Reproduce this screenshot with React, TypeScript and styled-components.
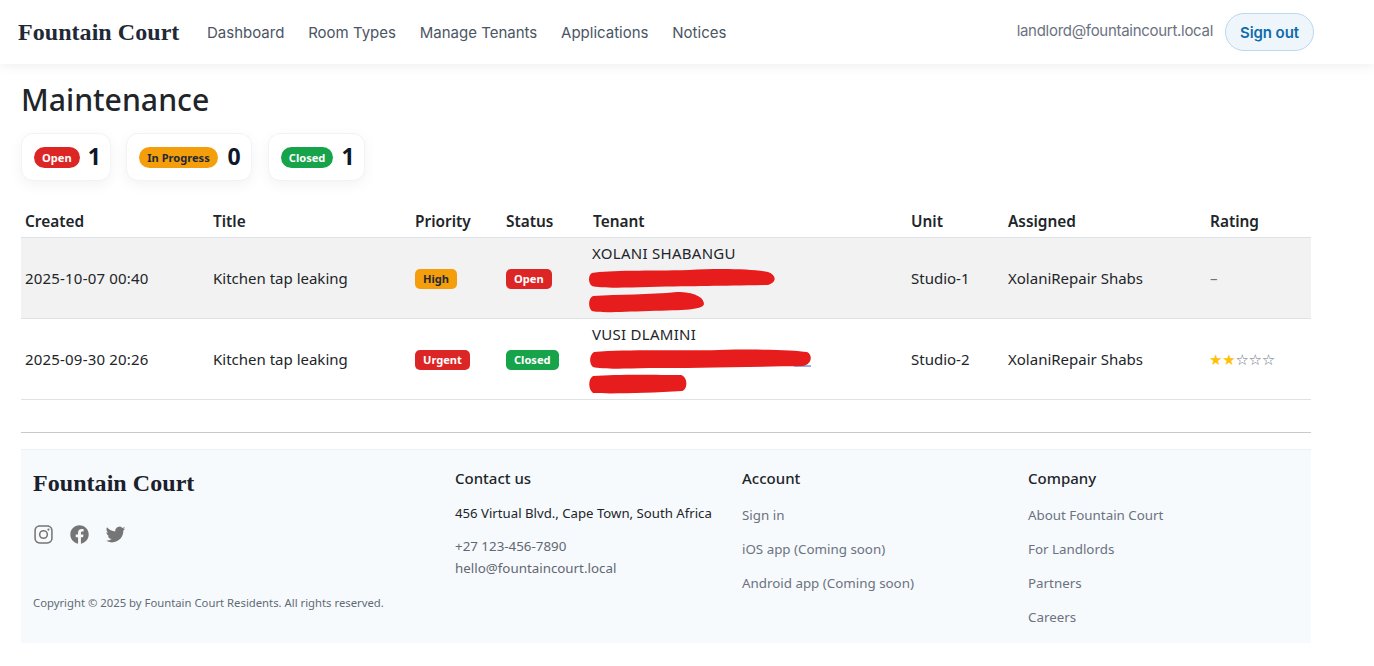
import React from "react";
import styled, { createGlobalStyle } from "styled-components";
import { IoLogoInstagram, IoLogoFacebook, IoLogoTwitter } from "react-icons/io5";

const Global = createGlobalStyle`
  html, body { margin: 0; padding: 0; background: #fff; overflow: hidden; }
  body { font-family: "Noto Sans", "Open Sans", sans-serif; color: #212529; }
`;

const Header = styled.header`
  height: 64px; display: flex; align-items: center; padding: 0 60px 0 18px;
  background: #fff; box-shadow: 0 1px 12px rgba(0,0,0,.08); position: relative;
`;
const Logo = styled.div<{ $size: number }>`
  font-family: "Liberation Serif", serif; font-weight: 700; font-size: ${p => p.$size}px;
  letter-spacing: .05px; color: #1f2937; white-space: nowrap;
`;
const Nav = styled.nav`
  display: flex; gap: 23.8px; margin-left: 27.6px; flex: 1;
  font-family: Inter, sans-serif; font-size: 15px; color: #4b5563;
`;
const Email = styled.span`
  font-family: Inter, sans-serif; font-size: 15px; letter-spacing: -.29px; color: #6b7280; margin-right: 12px; position: relative; top: -2px;
`;
const SignOut = styled.button`
  width: 89px; height: 38px; border-radius: 19px; border: 1px solid #b9d9f0; background: #eff6fb;
  font-family: Inter, sans-serif; font-size: 15px; font-weight: 600; letter-spacing: -.1px; color: #0f6cab; padding: 0;
`;
const Main = styled.main`
  padding: 0 63px 0 21px;
`;
const Title = styled.h1`
  margin: 0; padding-top: 15px; height: 54px; font-size: 30.2px; line-height: 42px; font-weight: 500; color: #212529;
`;
const Stats = styled.div`
  display: flex; gap: 15.5px; height: 73px;
`;
const StatCard = styled.div`
  height: 46px; display: flex; align-items: center; gap: 8px; padding: 0 9px 0 12px; background: #fff;
  border: 1px solid #f1f3f7; border-radius: 12px; box-shadow: 0 4px 14px rgba(15,23,42,.05);
`;
const Count = styled.span<{ $wide?: boolean }>`
  font-size: 23px; font-weight: 700; line-height: 30px; color: #0f172a; position: relative; top: -1px;
  margin: 0 ${p => (p.$wide ? "1.7px" : "0")};
`;
const tones = {
  red: "background:#dc2626;color:#fff;",
  amber: "background:#f59e0b;color:#1f2937;",
  green: "background:#16a34a;color:#fff;",
};
const Pill = styled.span<{ $tone: keyof typeof tones; $round?: boolean }>`
  ${p => tones[p.$tone]}
  display: inline-block; height: ${p => (p.$round ? 21 : 20)}px; line-height: ${p => (p.$round ? 21 : 20)}px;
  padding: 0 8px; font-size: 11.1px; font-weight: 700;
  border-radius: ${p => (p.$round ? "11px" : "5px")}; white-space: nowrap;
`;
const Table = styled.table`
  width: 1290px; border-collapse: collapse; table-layout: fixed; font-size: 15px;
`;
const Th = styled.th`
  text-align: left; font-weight: 600; font-size: 15.4px; height: 26px; padding: 0 4px 5px; vertical-align: bottom; line-height: 20px;
  border-bottom: 1px solid #dee2e6;
`;
const Row = styled.tr<{ $shade?: boolean }>`
  background: ${p => (p.$shade ? "#f2f2f2" : "#fff")};
`;
const Td = styled.td`
  height: 80px; padding: 0 4px; border-bottom: 1px solid #dee2e6; vertical-align: middle; line-height: 20px; color: #212529;
`;
const DateText = styled.span`
  letter-spacing: .19px;
`;
const TenantName = styled.div`
  height: 24px; line-height: 24px; margin-top: -2px; margin-left: -1px; letter-spacing: .28px;
`;
const Scribble = styled.svg`
  display: block; margin-left: -4px; height: 24px; width: 240px;
`;
const Dash = styled.span`color: #6b7280;`;
const Stars = styled.span`
  display: inline-flex; font-size: 15px; font-family: "DejaVu Sans", sans-serif; line-height: 20px; margin-left: -1px;
`;
const Star = styled.span<{ $on?: boolean }>`
  color: ${p => (p.$on ? "#ffc107" : "#6b7280")}; width: 13.2px; text-align: center;
`;
const Rule = styled.hr`
  margin: 32px 0 16px; border: 0; border-top: 1px solid #c9c9c9;
`;
const Footer = styled.footer`
  height: 194px; background: #f7fafd; border-top: 1px solid #eef0f2; box-sizing: border-box; padding: 0 12px;
  display: grid; grid-template-columns: 422px 287px 286px 1fr;
`;
const Column = styled.div`
  display: flex; flex-direction: column; padding-top: 17px;
`;
const BrandLogo = styled(Logo)`
  color: #1a202c; line-height: 30px; margin-top: 1px;
`;
const Icons = styled.div`
  display: flex; gap: 15px; margin-top: 26px; color: #757575; font-size: 21px; height: 24px;
`;
const Copy = styled.div`
  font-size: 11.3px; color: #616b75; margin-top: 47px; line-height: 16px;
`;
const ColTitle = styled.div`
  font-size: 15px; font-weight: 500; color: #212529; line-height: 22px; margin-bottom: 15px;
`;
const LinkList = styled.div`
  display: flex; flex-direction: column; gap: 16px; margin-top: 2px;
`;
const FLink = styled.div`
  font-size: 13.35px; color: #6b7280; line-height: 18px;
`;
const Address = styled.div`
  font-size: 13.2px; color: #212529; line-height: 18px; margin-bottom: 13px;
`;
const ContactLine = styled.div`
  font-size: 13.35px; color: #5f6872; line-height: 22px;
`;

const rows = [
  {
    created: "2025-10-07 00:40", priority: ["High", "amber"], status: ["Open", "red"], name: "XOLANI SHABANGU", unit: "Studio-1",
    a: "M3 8 C20 5 60 6 100 5 C130 3 165 4 179 7 C188 10 188 18 178 20 C130 21 110 21 60 22 C30 23 10 23 3 21 C-1 18 -1 10 3 8Z",
    b: "M4 7 C30 5 60 6 88 3 C105 3 115 8 115 15 C114 21 95 21 60 22 C30 23 10 24 3 22 C-1 19 -1 9 4 7Z",
    rating: 0,
  },
  {
    created: "2025-09-30 20:26", priority: ["Urgent", "red"], status: ["Closed", "green"], name: "VUSI DLAMINI", unit: "Studio-2",
    a: "M5 6 C40 3 90 5 130 4 C170 3 205 4 218 6 C224 9 223 18 214 20 C150 21 100 22 60 22 C30 23 12 23 4 21 C0 18 0 9 5 6Z",
    b: "M4 6 C30 4 70 5 92 5 C99 7 99 19 93 21 C60 23 20 24 4 23 C-1 19 -1 9 4 6Z",
    rating: 2,
  },
] as const;

const Redact = ({ d, ink }: { d: string; ink?: boolean }) => (
  <Scribble viewBox="0 0 240 24">
    {ink && <path d="M205 20 H222" stroke="#2f5fd0" strokeWidth="1" fill="none" />}
    <path d={d} fill="#e71d1d" />
  </Scribble>
);

export default function App() {
  return (
    <>
      <Global />
      <Header>
        <Logo $size={24}>Fountain Court</Logo>
        <Nav>
          <span>Dashboard</span><span>Room Types</span><span>Manage Tenants</span><span>Applications</span><span>Notices</span>
        </Nav>
        <Email>landlord@fountaincourt.local</Email>
        <SignOut>Sign out</SignOut>
      </Header>
      <Main>
        <Title>Maintenance</Title>
        <Stats>
          <StatCard><Pill $tone="red" $round>Open</Pill><Count>1</Count></StatCard>
          <StatCard><Pill $tone="amber" $round>In Progress</Pill><Count $wide>0</Count></StatCard>
          <StatCard><Pill $tone="green" $round>Closed</Pill><Count>1</Count></StatCard>
        </Stats>
        <Table>
          <colgroup>
            <col width={188} /><col width={202} /><col width={91} /><col width={87} /><col width={318} /><col width={97} /><col width={202} /><col width={105} />
          </colgroup>
          <thead>
            <tr>{["Created", "Title", "Priority", "Status", "Tenant", "Unit", "Assigned", "Rating"].map(h => <Th key={h}>{h}</Th>)}</tr>
          </thead>
          <tbody>
            {rows.map((r, i) => (
              <Row key={r.name} $shade={i === 0}>
                <Td><DateText>{r.created}</DateText></Td>
                <Td>Kitchen tap leaking</Td>
                <Td><Pill $tone={r.priority[1]}>{r.priority[0]}</Pill></Td>
                <Td><Pill $tone={r.status[1]}>{r.status[0]}</Pill></Td>
                <Td>
                  <TenantName>{r.name}</TenantName>
                  <Redact d={r.a} ink={i === 1} />
                  <Redact d={r.b} />
                </Td>
                <Td>{r.unit}</Td>
                <Td>XolaniRepair Shabs</Td>
                <Td>
                  {r.rating === 0 ? <Dash>–</Dash> : (
                    <Stars>{[0, 1, 2, 3, 4].map(s => <Star key={s} $on={s < r.rating}>{s < r.rating ? "★" : "☆"}</Star>)}</Stars>
                  )}
                </Td>
              </Row>
            ))}
          </tbody>
        </Table>
        <Rule />
        <Footer>
          <Column>
            <BrandLogo $size={24}>Fountain Court</BrandLogo>
            <Icons><IoLogoInstagram /><IoLogoFacebook /><IoLogoTwitter /></Icons>
            <Copy>Copyright © 2025 by Fountain Court Residents. All rights reserved.</Copy>
          </Column>
          <Column>
            <ColTitle>Contact us</ColTitle>
            <Address>456 Virtual Blvd., Cape Town, South Africa</Address>
            <ContactLine>+27 123-456-7890</ContactLine>
            <ContactLine>hello@fountaincourt.local</ContactLine>
          </Column>
          <Column>
            <ColTitle>Account</ColTitle>
            <LinkList><FLink>Sign in</FLink><FLink>iOS app (Coming soon)</FLink><FLink>Android app (Coming soon)</FLink></LinkList>
          </Column>
          <Column>
            <ColTitle>Company</ColTitle>
            <LinkList><FLink>About Fountain Court</FLink><FLink>For Landlords</FLink><FLink>Partners</FLink><FLink>Careers</FLink></LinkList>
          </Column>
        </Footer>
      </Main>
    </>
  );
}
